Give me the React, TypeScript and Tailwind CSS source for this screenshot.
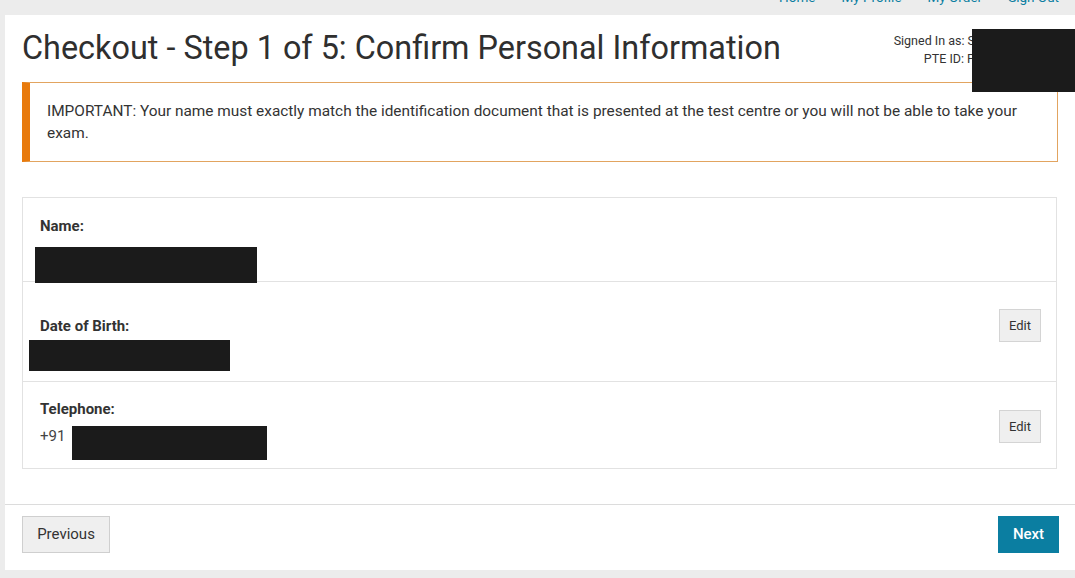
import React from 'react';

const Redact: React.FC<{ className?: string }> = ({ className = '' }) => (
  <div className={`bg-[#1b1b1b] ${className}`} />
);

const EditButton: React.FC = () => (
  <button
    type="button"
    className="h-[33px] w-[42px] border border-[#d4d4d4] bg-[#efefef] text-[13px] text-[#333]"
  >
    Edit
  </button>
);

const App: React.FC = () => {
  const links = ['Home', 'My Profile', 'My Order', 'Sign Out'];

  return (
    <div className="min-h-[578px] bg-[#ececec] font-['Roboto',sans-serif] text-[#333]">
      {/* top nav, mostly scrolled off */}
      <div className="flex h-[15px] justify-end gap-[26px] overflow-hidden pr-[16px]">
        {links.map((l) => (
          <a key={l} href="#" className="-mt-[10px] text-[13.5px] leading-[15px] text-[#0b7ea1]">
            {l}
          </a>
        ))}
      </div>

      <div className="ml-[5px] h-[555px] bg-white">
        {/* header */}
        <div className="relative flex items-start justify-between pl-[17px] pr-[100px] pt-[12px]">
          <h1 className="text-[32.4px] leading-[42px] font-normal text-[#2f2f2f]">
            Checkout - Step 1 of 5: Confirm Personal Information
          </h1>
          <div className="mt-[5px] text-right text-[12.5px] leading-[18px] text-[#333]">
            <div>Signed In as: S</div>
            <div>PTE ID: P</div>
          </div>
          <Redact className="absolute right-0 top-[14px] h-[63px] w-[103px]" />
        </div>

        {/* important notice */}
        <div className="ml-[17px] mr-[17px] mt-[13px] border border-l-[8px] border-[#e2a460] border-l-[#e87a0c] px-[17px] pb-[17px] pt-[17px] text-[15.4px] leading-[22px] text-[#333]">
          IMPORTANT: Your name must exactly match the identification document that is presented at the test centre or you will not be able to take your exam.
        </div>

        {/* details list */}
        <div className="ml-[17px] mr-[18px] mt-[35px] border border-[#e2e2e2]">
          <div className="h-[84px] border-b border-[#e2e2e2] pl-[17px] pt-[18px]">
            <div className="text-[15px] font-bold leading-[20px]">Name:</div>
            <Redact className="-ml-[5px] mt-[11px] h-[36px] w-[222px]" />
          </div>

          <div className="flex h-[100px] items-start justify-between border-b border-[#e2e2e2] pl-[17px] pr-[15px]">
            <div className="pt-[34px]">
              <div className="text-[15px] font-bold leading-[20px]">Date of Birth:</div>
              <Redact className="-ml-[11px] mt-[4px] h-[31px] w-[201px]" />
            </div>
            <div className="pt-[27px]">
              <EditButton />
            </div>
          </div>

          <div className="flex h-[86px] items-start justify-between pl-[17px] pr-[15px]">
            <div className="pt-[17px]">
              <div className="text-[15px] font-bold leading-[20px]">Telephone:</div>
              <div className="mt-[7px] flex items-start">
                <span className="text-[15px] leading-[20px] text-[#444]">+91</span>
                <Redact className="ml-[7px] h-[34px] w-[195px]" />
              </div>
            </div>
            <div className="pt-[28px]">
              <EditButton />
            </div>
          </div>
        </div>

        {/* footer */}
        <div className="mt-[35px] flex items-center justify-between border-t border-[#dcdcdc] pl-[17px] pr-[16px] pt-[11px]">
          <button
            type="button"
            className="h-[37px] w-[88px] border border-[#cfcfcf] bg-[#efefef] text-[15px] text-[#333]"
          >
            Previous
          </button>
          <button
            type="button"
            className="h-[37px] w-[61px] bg-[#0b7ea1] text-[15px] font-medium text-white"
          >
            Next
          </button>
        </div>
      </div>
    </div>
  );
};

export default App;
